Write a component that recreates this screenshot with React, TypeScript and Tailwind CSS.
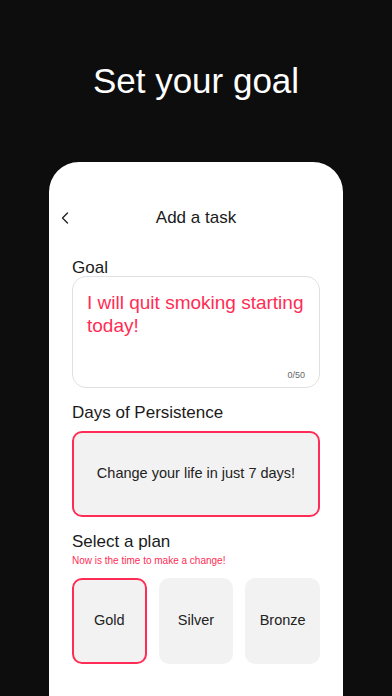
import { ChevronLeft } from 'lucide-react';

const plans = ['Gold', 'Silver', 'Bronze'];

export default function App() {
  const selected = 'Gold';

  return (
    <div className="w-[392px] h-[696px] bg-[#0d0d0d] overflow-hidden flex flex-col items-center font-['Liberation_Sans',Arial,sans-serif]">
      <h1 className="mt-[60px] text-[35px] leading-[41px] text-white">Set your goal</h1>

      {/* Card */}
      <div className="mt-[61px] w-[294px] flex-1 bg-white rounded-t-[30px] pt-[44px] px-[23px]">
        {/* Header */}
        <div className="relative h-[24px] flex items-center justify-center">
          <ChevronLeft
            size={20}
            strokeWidth={1.6}
            className="absolute left-[-17px] top-[2px] text-[#222222]"
          />
          <span className="text-[17px] leading-[24px] text-[#1a1a1a]">Add a task</span>
        </div>

        {/* Goal */}
        <div className="mt-[29px] text-[17px] leading-[17px] text-[#1a1a1a]">Goal</div>
        <div className="relative h-[112px] border border-[#e0e0e0] rounded-[14px] pl-[14px] pr-[8px] pt-[14px]">
          <p className="text-[19px] leading-[23px] text-[#ff2d55]">
            I will quit smoking starting today!
          </p>
          <span className="absolute right-[14px] bottom-[6px] text-[9px] leading-[12px] text-[#666666]">
            0/50
          </span>
        </div>

        {/* Days of Persistence */}
        <div className="mt-[15px] text-[17px] leading-[20px] text-[#1a1a1a]">Days of Persistence</div>
        <div className="mt-[8px] h-[86px] bg-[#f2f2f2] border-2 border-[#ff2d55] rounded-[10px] flex items-center justify-center">
          <span className="text-[14.5px] text-[#222222]">Change your life in just 7 days!</span>
        </div>

        {/* Select a plan */}
        <div className="mt-[15px] text-[17px] leading-[20px] text-[#1a1a1a]">Select a plan</div>
        <div className="mt-[3px] text-[10px] leading-[12px] text-[#ff2d55]">Now is the time to make a change!</div>
        <div className="mt-[11px] grid grid-cols-3 gap-[12px]">
          {plans.map((p) => (
            <div
              key={p}
              className={
                p === selected
                  ? 'h-[86px] bg-[#f2f2f2] rounded-[10px] border-2 border-[#ff2d55] flex items-center justify-center'
                  : 'h-[86px] bg-[#f2f2f2] rounded-[10px] flex items-center justify-center'
              }
            >
              <span className="text-[14.5px] text-[#222222]">{p}</span>
            </div>
          ))}
        </div>
      </div>
    </div>
  );
}
